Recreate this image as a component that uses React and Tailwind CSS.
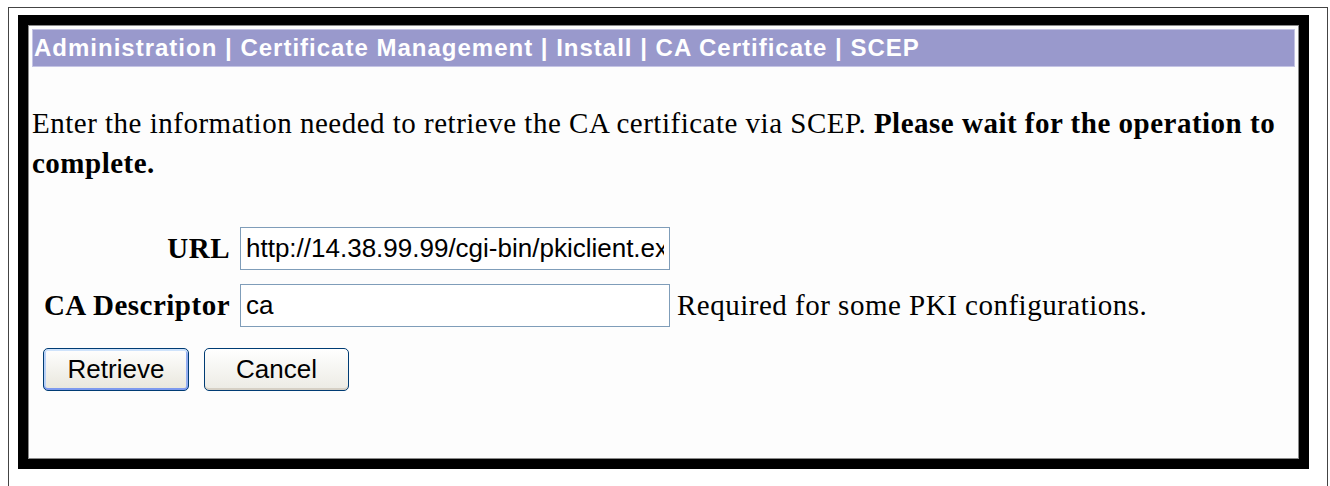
export default function App() {
  const serif = "font-['Liberation_Serif','Times_New_Roman',serif]";
  const sans = "font-['Liberation_Sans',Arial,sans-serif]";

  return (
    <div className="w-[1330px] h-[486px] bg-white overflow-hidden pt-[7px] pl-[8px]">
      {/* thin outer frame, open at the bottom */}
      <div className="w-[1320px] h-[479px] border-t border-x border-[#444] pt-[7px] pl-[9px]">
        {/* heavy black window frame */}
        <div className="w-[1291px] h-[454px] border-[10px] border-black">
          <div className="h-full bg-[#fdfdfd] border border-[#8a8a8a] p-[3px]">
            {/* breadcrumb bar */}
            <div
              className={`h-[38px] bg-[#9999cc] border border-[#c4c4e4] flex items-center pl-[1px] text-white font-bold text-[24px] tracking-[1px] whitespace-nowrap ${sans}`}
            >
              Administration | Certificate Management | Install | CA Certificate | SCEP
            </div>

            <p className={`mt-[36px] text-[29px] leading-[40px] tracking-[0.5px] text-black ${serif}`}>
              <span className="whitespace-nowrap">
                Enter the information needed to retrieve the CA certificate via SCEP.{" "}
                <b>Please wait for the operation to</b>
              </span>
              <br />
              <b>complete.</b>
            </p>

            {/* form */}
            <div className={`mt-[44px] flex flex-col gap-[13px] text-[29px] tracking-[0.5px] text-black ${serif}`}>
              <div className="flex items-center">
                <label className="w-[198px] text-right font-bold">URL</label>
                <input
                  readOnly
                  value="http://14.38.99.99/cgi-bin/pkiclient.exe"
                  className={`ml-[10px] w-[430px] h-[43px] border border-[#7f9db9] bg-white px-[5px] text-[26px] tracking-normal text-black outline-none ${sans}`}
                />
              </div>
              <div className="flex items-center">
                <label className="w-[198px] text-right font-bold whitespace-nowrap">CA Descriptor</label>
                <input
                  readOnly
                  value="ca"
                  className={`ml-[10px] w-[430px] h-[43px] border border-[#7f9db9] bg-white px-[5px] text-[26px] tracking-normal text-black outline-none ${sans}`}
                />
                <span className="ml-[7px] whitespace-nowrap">Required for some PKI configurations.</span>
              </div>
            </div>

            <div className={`mt-[21px] pl-[11px] flex gap-[15px] text-[26px] text-black ${sans}`}>
              <button
                type="button"
                className="w-[146px] h-[43px] rounded-[5px] border border-[#003c74] bg-linear-to-b from-white to-[#e8e6dc] shadow-[inset_0_2px_0_#cfe3fb,inset_0_-2px_0_#7d99ee,inset_2px_0_0_#b9d1f7,inset_-2px_0_0_#93adf0]"
              >
                Retrieve
              </button>
              <button
                type="button"
                className="w-[145px] h-[43px] rounded-[5px] border border-[#003c74] bg-linear-to-b from-white to-[#ecebe4] shadow-[inset_0_-2px_0_#d6d0c5]"
              >
                Cancel
              </button>
            </div>
          </div>
        </div>
      </div>
    </div>
  );
}
